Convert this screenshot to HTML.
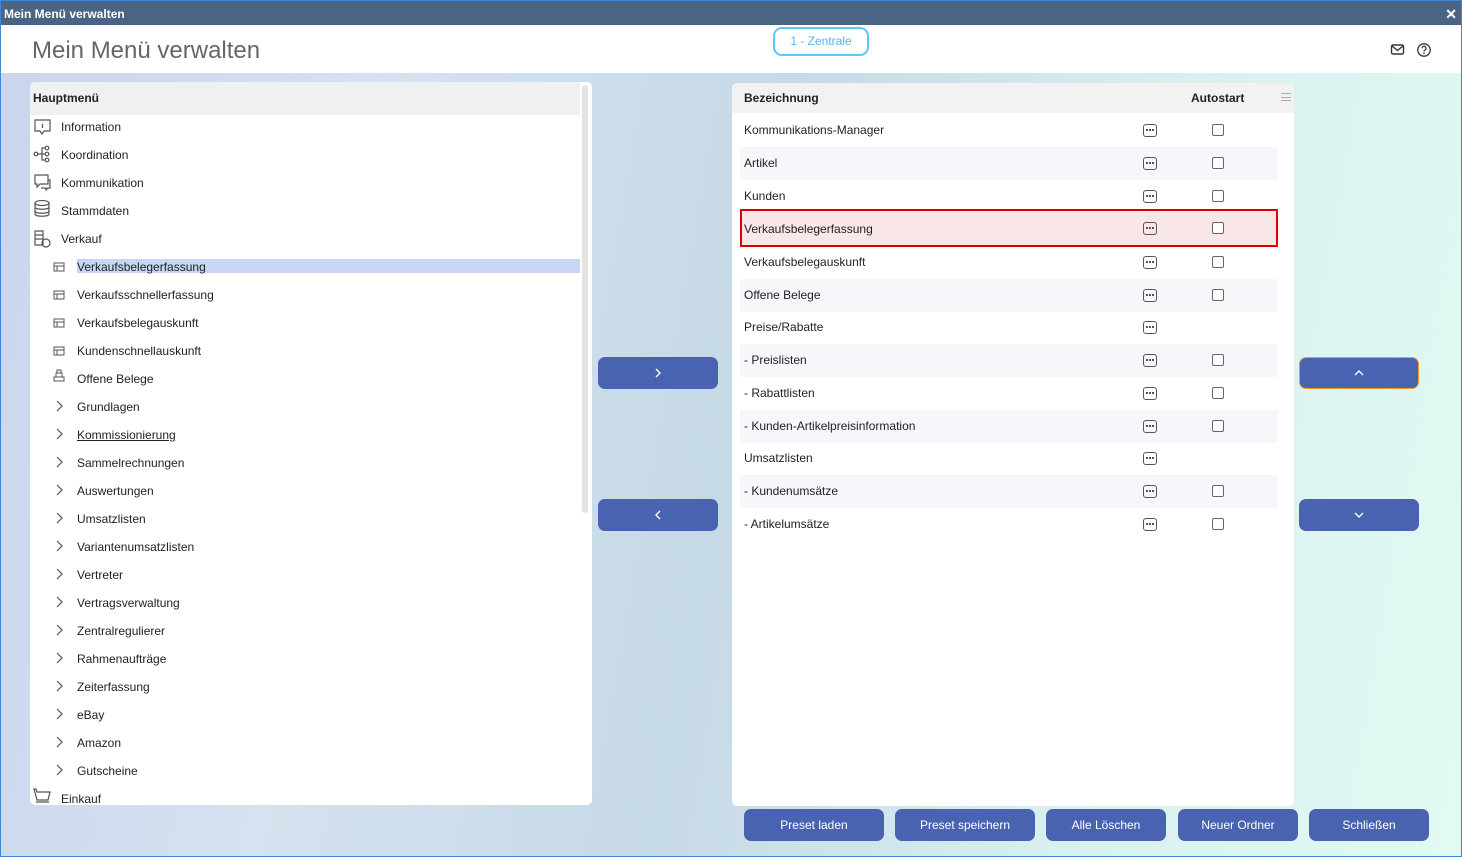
<!DOCTYPE html>
<html><head><meta charset="utf-8"><style>
*{box-sizing:border-box;margin:0;padding:0}
body{width:1462px;height:857px;overflow:hidden;font-family:"Liberation Sans",Arial,sans-serif;font-size:12px;color:#222;position:relative;background:#fff}
.win{position:absolute;left:0;top:0;width:1462px;height:857px;border:1px solid #3f86d8;background:linear-gradient(100deg,#c9d5ee 0%,#d5e2ef 25%,#c6d9e6 50%,#d9f0f0 75%,#e2faf3 100%)}
.tb{position:absolute;left:0;top:0;width:1460px;height:24px;background:#4a6584;color:#fff;font-weight:bold;font-size:12px;line-height:26px;padding-left:3px}
.tb .x{position:absolute;right:4px;top:0;font-size:14px}
.hd{position:absolute;left:0;top:24px;width:1460px;height:48px;background:#fff}
.hd h1{position:absolute;left:31px;top:12px;font-weight:normal;font-size:24px;color:#666}
.pill{position:absolute;left:772px;top:2px;width:96px;height:29px;border:2px solid #5bc8f5;border-radius:9px;color:#4cb8ee;text-align:center;line-height:25px;font-size:12px}
.panel{position:absolute;background:#fff;border-radius:5px;overflow:hidden}
.lrow{position:absolute;left:0;height:20px;line-height:20px;font-size:12px}
.btn{position:absolute;background:#4a63b0;border-radius:7px;color:#fff;text-align:center;font-size:12px}
.rrow{position:absolute;left:8px;width:538px;height:33px;line-height:33px;padding-left:4px}
.alt{background:#f6f7fb}
.dots{position:absolute;left:403px;top:10px;width:14px;height:13px;border:1.6px solid #555;border-radius:3px}
.dots:after{content:"";position:absolute;left:2px;top:4px;width:2px;height:2px;background:#555;box-shadow:3px 0 #555,6px 0 #555}
.cb{position:absolute;left:472px;top:10px;width:12px;height:12px;border:1px solid #666;border-radius:2px;background:#fff}
</style></head><body>
<div class="win">
<div class="tb">Mein Menü verwalten<span class="x">✕</span></div>
<div class="hd"><h1>Mein Menü verwalten</h1><div class="pill">1 - Zentrale</div>
<svg style="position:absolute;left:1389px;top:18px" width="16" height="14" viewBox="0 0 16 14"><rect x="1.5" y="2" width="12" height="9" rx="1.5" fill="none" stroke="#333" stroke-width="1.4"/><path d="M2 3l5.5 4.5L13 3" fill="none" stroke="#333" stroke-width="1.4"/></svg>
<svg style="position:absolute;left:1415px;top:17px" width="16" height="16" viewBox="0 0 16 16"><circle cx="8" cy="8" r="6.2" fill="none" stroke="#333" stroke-width="1.3"/><path d="M6 6.3a2 2 0 1 1 2.6 1.9c-.5.2-.6.6-.6 1.3" fill="none" stroke="#333" stroke-width="1.2"/><circle cx="8" cy="11.2" r=".8" fill="#333"/></svg>
</div>

<div class="panel" style="left:29px;top:81px;width:562px;height:723px">
<div style="position:absolute;left:0;top:0;width:550px;height:33px;background:#f0f0f0;font-weight:bold;line-height:33px;padding-left:3px">Hauptmenü</div>
<div style="position:absolute;left:552px;top:3px;width:6px;height:428px;background:#e3e3e3;border-radius:3px"></div>
<div style="position:absolute;left:47px;top:177px;width:503px;height:14px;background:#c6d6f3"></div>
<svg style="position:absolute;left:3px;top:35px" width="20" height="200" viewBox="0 0 20 200" fill="none" stroke="#555" stroke-width="1.2">
<path d="M2 3h15v11h-6l-2 3-2-3H2z"/><path d="M9.5 7v4M9.5 5v.5"/>
<circle cx="3" cy="37" r="1.8"/><circle cx="14" cy="31" r="1.8"/><circle cx="14" cy="37" r="1.8"/><circle cx="14" cy="43" r="1.8"/><path d="M5 37h7M9 37v-6h3M9 37v6h3"/>
<path d="M2 58h13v9H7l-3 3v-3H2z"/><path d="M15 63h2v8h-2l-2 2v-2H8"/>
<ellipse cx="9" cy="86" rx="7" ry="2.5"/><path d="M2 86v11c0 3 14 3 14 0V86M2 90c0 3 14 3 14 0M2 94c0 3 14 3 14 0"/>
<path d="M2 114h8v14H2zM2 118h8M2 122h8"/><circle cx="13" cy="126" r="4"/>
</svg>
<svg style="position:absolute;left:23px;top:180px" width="12" height="120" viewBox="0 0 12 120" fill="none" stroke="#555" stroke-width="1">
<rect x="1" y="1" width="10" height="8"/><path d="M1 4h10M4 4v5"/>
<rect x="1" y="29" width="10" height="8"/><path d="M1 32h10M4 32v5"/>
<rect x="1" y="57" width="10" height="8"/><path d="M1 60h10M4 60v5"/>
<rect x="1" y="85" width="10" height="8"/><path d="M1 88h10M4 88v5"/>
<path d="M3 115v-4h6v4M1 115h10v4H1zM4 111v-3h4v3"/>
</svg>
<svg style="position:absolute;left:24px;top:317px" width="10" height="380" viewBox="0 0 10 380" fill="none" stroke="#555" stroke-width="1.2">
<path d="M3 2l5 5-5 5M3 30l5 5-5 5M3 58l5 5-5 5M3 86l5 5-5 5M3 114l5 5-5 5M3 142l5 5-5 5M3 170l5 5-5 5M3 198l5 5-5 5M3 226l5 5-5 5M3 254l5 5-5 5M3 282l5 5-5 5M3 310l5 5-5 5M3 338l5 5-5 5M3 366l5 5-5 5"/>
</svg>
<svg style="position:absolute;left:3px;top:706px" width="18" height="16" viewBox="0 0 18 16" fill="none" stroke="#555" stroke-width="1.2"><path d="M1 1h2l1 3h13l-2 8H4zM3 14h13"/></svg>
<div class="lrow" style="left:31px;top:35px">Information</div>
<div class="lrow" style="left:31px;top:63px">Koordination</div>
<div class="lrow" style="left:31px;top:91px">Kommunikation</div>
<div class="lrow" style="left:31px;top:119px">Stammdaten</div>
<div class="lrow" style="left:31px;top:147px">Verkauf</div>
<div class="lrow" style="left:47px;top:175px">Verkaufsbelegerfassung</div>
<div class="lrow" style="left:47px;top:203px">Verkaufsschnellerfassung</div>
<div class="lrow" style="left:47px;top:231px">Verkaufsbelegauskunft</div>
<div class="lrow" style="left:47px;top:259px">Kundenschnellauskunft</div>
<div class="lrow" style="left:47px;top:287px">Offene Belege</div>
<div class="lrow" style="left:47px;top:315px">Grundlagen</div>
<div class="lrow" style="left:47px;top:343px;text-decoration:underline">Kommissionierung</div>
<div class="lrow" style="left:47px;top:371px">Sammelrechnungen</div>
<div class="lrow" style="left:47px;top:399px">Auswertungen</div>
<div class="lrow" style="left:47px;top:427px">Umsatzlisten</div>
<div class="lrow" style="left:47px;top:455px">Variantenumsatzlisten</div>
<div class="lrow" style="left:47px;top:483px">Vertreter</div>
<div class="lrow" style="left:47px;top:511px">Vertragsverwaltung</div>
<div class="lrow" style="left:47px;top:539px">Zentralregulierer</div>
<div class="lrow" style="left:47px;top:567px">Rahmenaufträge</div>
<div class="lrow" style="left:47px;top:595px">Zeiterfassung</div>
<div class="lrow" style="left:47px;top:623px">eBay</div>
<div class="lrow" style="left:47px;top:651px">Amazon</div>
<div class="lrow" style="left:47px;top:679px">Gutscheine</div>
<div class="lrow" style="left:31px;top:707px">Einkauf</div>
</div>

<div class="btn" style="left:597px;top:356px;width:120px;height:32px"><svg width="8" height="12" style="margin-top:10px" viewBox="0 0 8 12"><path d="M2 2l4 4-4 4" fill="none" stroke="#fff" stroke-width="1.4"/></svg></div>
<div class="btn" style="left:597px;top:498px;width:120px;height:32px"><svg width="8" height="12" style="margin-top:10px" viewBox="0 0 8 12"><path d="M6 2L2 6l4 4" fill="none" stroke="#fff" stroke-width="1.4"/></svg></div>
<div class="btn" style="left:1298px;top:356px;width:120px;height:32px;border:1px solid #f0a020"><svg width="12" height="8" style="margin-top:11px" viewBox="0 0 12 8"><path d="M2 6l4-4 4 4" fill="none" stroke="#fff" stroke-width="1.4"/></svg></div>
<div class="btn" style="left:1298px;top:498px;width:120px;height:32px"><svg width="12" height="8" style="margin-top:12px" viewBox="0 0 12 8"><path d="M2 2l4 4 4-4" fill="none" stroke="#fff" stroke-width="1.4"/></svg></div>

<div class="panel" style="left:731px;top:82px;width:562px;height:723px">
<div style="position:absolute;left:0;top:0;width:562px;height:30px;background:#f2f2f2;font-weight:bold;line-height:30px">
<span style="position:absolute;left:12px">Bezeichnung</span><span style="position:absolute;left:459px">Autostart</span>
<span style="position:absolute;left:549px;top:10px;width:10px;height:8px;border-top:1px solid #aaa;border-bottom:1px solid #aaa"></span><span style="position:absolute;left:549px;top:14px;width:10px;border-top:1px solid #aaa"></span></div>
<div class="rrow" style="top:31px">Kommunikations-Manager<i class="dots"></i><i class="cb"></i></div>
<div class="rrow alt" style="top:64px">Artikel<i class="dots"></i><i class="cb"></i></div>
<div class="rrow" style="top:97px">Kunden<i class="dots"></i><i class="cb"></i></div>
<div class="rrow" style="top:126px;height:38px;line-height:36px;background:#f9e6e6;border:2px solid #e00000;padding-left:2px"><span>Verkaufsbelegerfassung</span><i class="dots" style="left:401px;top:11px"></i><i class="cb" style="left:470px;top:11px"></i></div>
<div class="rrow" style="top:163px">Verkaufsbelegauskunft<i class="dots"></i><i class="cb"></i></div>
<div class="rrow alt" style="top:196px">Offene Belege<i class="dots"></i><i class="cb"></i></div>
<div class="rrow" style="top:228px">Preise/Rabatte<i class="dots"></i></div>
<div class="rrow alt" style="top:261px">- Preislisten<i class="dots"></i><i class="cb"></i></div>
<div class="rrow" style="top:294px">- Rabattlisten<i class="dots"></i><i class="cb"></i></div>
<div class="rrow alt" style="top:327px">- Kunden-Artikelpreisinformation<i class="dots"></i><i class="cb"></i></div>
<div class="rrow" style="top:359px">Umsatzlisten<i class="dots"></i></div>
<div class="rrow alt" style="top:392px">- Kundenumsätze<i class="dots"></i><i class="cb"></i></div>
<div class="rrow" style="top:425px">- Artikelumsätze<i class="dots"></i><i class="cb"></i></div>
</div>

<div class="btn" style="left:743px;top:808px;width:140px;height:32px;line-height:32px">Preset laden</div>
<div class="btn" style="left:894px;top:808px;width:140px;height:32px;line-height:32px">Preset speichern</div>
<div class="btn" style="left:1045px;top:808px;width:120px;height:32px;line-height:32px">Alle Löschen</div>
<div class="btn" style="left:1177px;top:808px;width:120px;height:32px;line-height:32px">Neuer Ordner</div>
<div class="btn" style="left:1308px;top:808px;width:120px;height:32px;line-height:32px">Schließen</div>
</div>
</body></html>
